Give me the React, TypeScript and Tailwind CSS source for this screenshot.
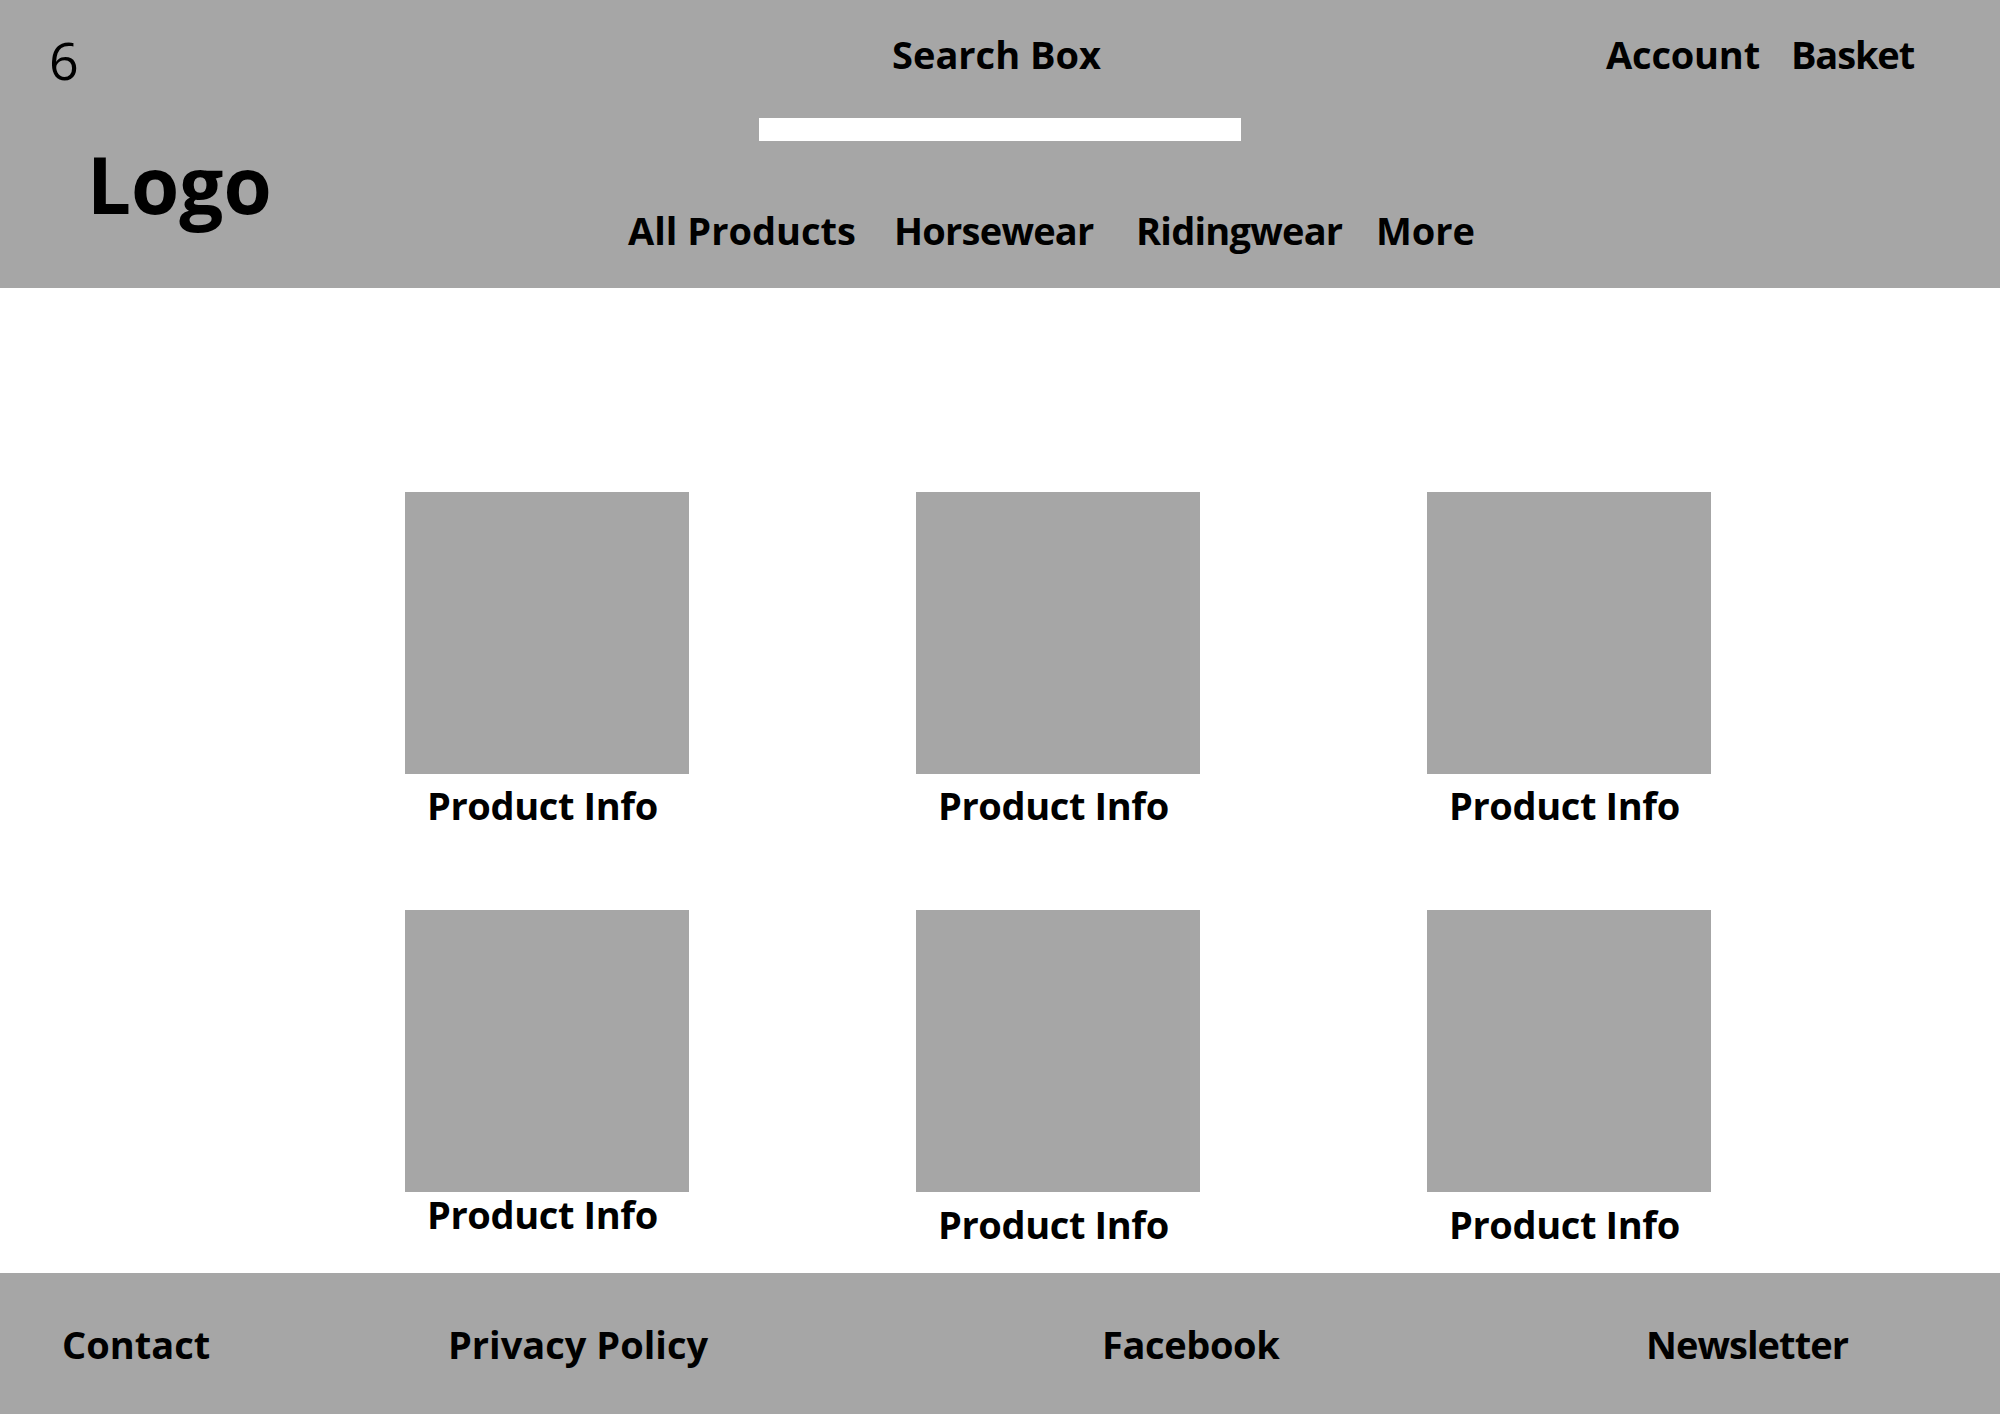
import React from 'react';

// Каркас страницы магазина: шапка, сетка товаров, подвал
const font = "font-['Open_Sans',sans-serif]";

const navItems = [
    { label: 'All Products', cls: 'w-[266px]' },
    { label: 'Horsewear', cls: 'w-[242px] tracking-[-0.02em]' },
    { label: 'Ridingwear', cls: 'w-[240px] tracking-[-0.02em]' },
    { label: 'More', cls: '' },
];

const footerItems = [
    { label: 'Contact', cls: 'w-[386px]' },
    { label: 'Privacy Policy', cls: 'w-[654px]' },
    { label: 'Facebook', cls: 'w-[544px] tracking-[-0.01em]' },
    { label: 'Newsletter', cls: 'tracking-[-0.025em]' },
];

function ProductCard({ textOffset }: { textOffset: string }) {
    return (
        <div className="flex flex-col">
            <div className="w-[284px] h-[282px] bg-[#a6a6a6]" />
            <p className={`${textOffset} pl-[22px] text-[38px] leading-none font-bold tracking-[-0.01em] text-black whitespace-nowrap`}>
                Product Info
            </p>
        </div>
    );
}

export default function App() {
    return (
        <div className={`${font} w-full h-[1414px] overflow-hidden flex flex-col bg-white text-black`}>
            <header className="h-[288px] shrink-0 bg-[#a6a6a6] flex items-start">
                <div className="w-[628px] shrink-0 pl-[49px] pt-[34px] flex flex-col">
                    <span className="text-[52px] leading-none font-normal">6</span>
                    <span className="mt-[59px] ml-[38px] text-[78px] leading-none font-bold">Logo</span>
                </div>

                <div className="w-[900px] shrink-0 pt-[35px] flex flex-col">
                    <span className="ml-[264px] text-[38px] leading-none font-bold whitespace-nowrap">Search Box</span>
                    <div className="mt-[45px] ml-[131px] w-[482px] h-[23px] bg-white" />
                    <nav className="mt-[70px] flex">
                        {navItems.map((item) => (
                            <span
                                key={item.label}
                                className={`${item.cls} shrink-0 text-[38px] leading-none font-bold whitespace-nowrap`}
                            >
                                {item.label}
                            </span>
                        ))}
                    </nav>
                </div>

                <div className="pt-[35px] pl-[78px] flex gap-[31px] text-[38px] leading-none font-bold">
                    <span className="tracking-[-0.005em]">Account</span>
                    <span className="tracking-[-0.03em]">Basket</span>
                </div>
            </header>

            <main className="h-[985px] shrink-0 pt-[204px] pl-[405px]">
                <div className="grid grid-cols-[284px_284px_284px] gap-x-[227px] gap-y-[86px]">
                    <ProductCard textOffset="mt-[12px]" />
                    <ProductCard textOffset="mt-[12px]" />
                    <ProductCard textOffset="mt-[12px]" />
                    <ProductCard textOffset="mt-[3px]" />
                    <ProductCard textOffset="mt-[13px]" />
                    <ProductCard textOffset="mt-[13px]" />
                </div>
            </main>

            <footer className="flex-1 bg-[#a6a6a6] pt-[52px] pl-[62px] flex">
                {footerItems.map((item) => (
                    <span
                        key={item.label}
                        className={`${item.cls} shrink-0 text-[38px] leading-none font-bold whitespace-nowrap`}
                    >
                        {item.label}
                    </span>
                ))}
            </footer>
        </div>
    );
}
